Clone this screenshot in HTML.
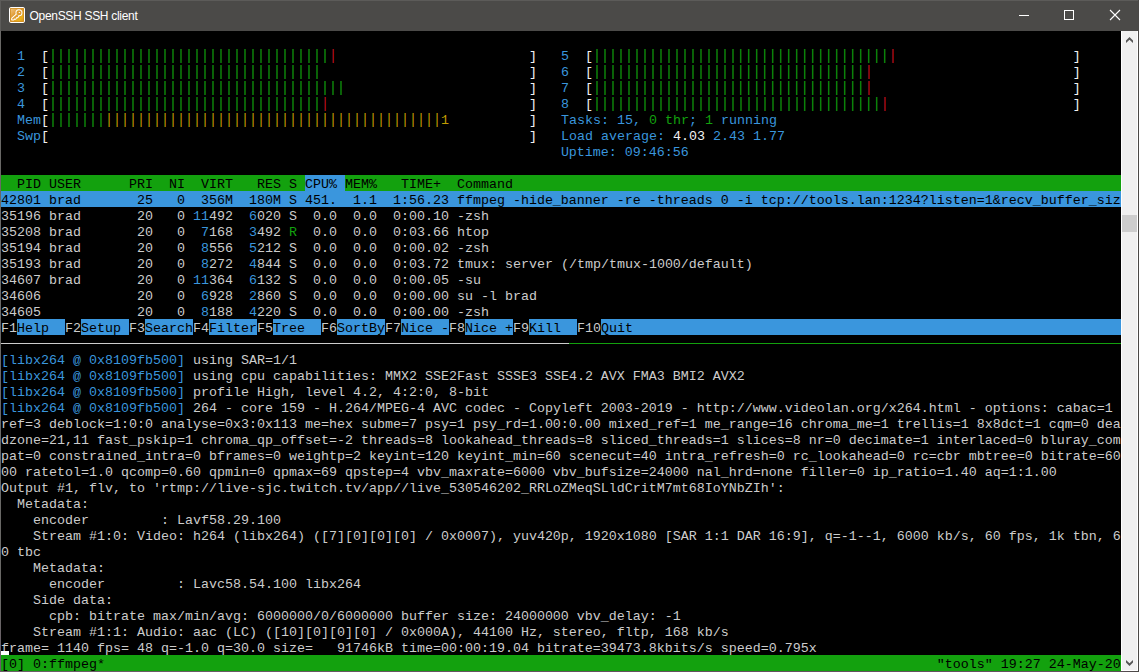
<!DOCTYPE html>
<html><head><meta charset="utf-8"><title>OpenSSH SSH client</title>
<style>
html,body{margin:0;padding:0;background:#000;overflow:hidden}
#win{position:absolute;left:0;top:0;width:1139px;height:672px;background:#000;overflow:hidden}
#tb{position:absolute;left:0;top:0;width:1139px;height:31px;background:#4b4a48}
#tb .t{position:absolute;left:29.5px;top:1px;letter-spacing:-0.3px;height:31px;line-height:31px;color:#fff;font-family:"Liberation Sans",sans-serif;font-size:12px;white-space:pre}
#bt{position:absolute;left:0;top:0;width:1139px;height:1px;background:#5c5b59}
#bl0{position:absolute;left:0;top:0;width:1px;height:31px;background:#5c5b59}
#bl{position:absolute;left:0;top:31px;width:1px;height:641px;background:linear-gradient(180deg,#696866 0,#696866 90%,#6a5a68 100%)}
#br{position:absolute;left:1138px;top:0;width:1px;height:672px;background:#4a4846}
#bb{position:absolute;left:0;top:671px;width:1139px;height:1px;background:linear-gradient(90deg,#6c6068 0,#64525f 50%,#64525f 97%,#4a4846 100%)}
#sb{position:absolute;left:1121px;top:31px;width:15px;height:639px;background:#f0f0f0;border-left:1px solid #fff;border-right:1px solid #fff;border-bottom:1px solid #fff}
#th{position:absolute;left:0;top:184px;width:15px;height:17px;background:#cdcdcd}
#term{position:absolute;left:1px;top:31px;width:1120px;height:640px;overflow:hidden;background:#000;color:#cccccc;font-family:"Liberation Mono",monospace;font-size:13.33px}
.r{position:absolute;left:0;height:16px;line-height:20px;white-space:pre}
.r span{display:inline-block;height:16px;vertical-align:top}
.r span.v{transform:scaleY(1.15);transform-origin:50% 100%}
#dv1{position:absolute;left:0;top:312px;width:568px;height:1px;background:#cccccc}
#dv2{position:absolute;left:568px;top:312px;width:552px;height:1px;background:#13a10e}
#cur{position:absolute;left:0;top:620px;width:8px;height:4px;background:#fff}
</style></head><body>
<div id="win">
<div id="tb">
<svg style="position:absolute;left:9px;top:7px" width="16" height="16" viewBox="0 0 16 16">
<defs><linearGradient id="g" x1="0" y1="0" x2="1" y2="1"><stop offset="0" stop-color="#f2c47e"/><stop offset="0.45" stop-color="#dc9428"/><stop offset="0.8" stop-color="#ecb21c"/><stop offset="1" stop-color="#d9951f"/></linearGradient></defs>
<rect x="0.5" y="0.5" width="15" height="15" rx="1.3" fill="#d28e22" stroke="#fff" stroke-width="1"/>
<rect x="1.8" y="1.8" width="12.4" height="12.4" rx="0.8" fill="url(#g)"/>
<g fill="#fff" stroke="#fff" stroke-width="2" stroke-linejoin="round"><circle cx="9.95" cy="5.7" r="2.5"/><path d="M7.9 7.2 L3.2 11.6 L3.1 12.5 L4.6 12.4 L5.3 11.4 L6.6 11.7 L7.2 10.3 L8.4 10.3 L9.6 8.7 Z"/></g>
<g fill="#e09c30"><circle cx="9.95" cy="5.7" r="2.5"/><path d="M7.9 7.2 L3.2 11.6 L3.1 12.5 L4.6 12.4 L5.3 11.4 L6.6 11.7 L7.2 10.3 L8.4 10.3 L9.6 8.7 Z"/></g>
<ellipse cx="10.4" cy="5.5" rx="0.75" ry="0.5" fill="#fff"/>
</svg>
<div class="t">OpenSSH SSH client</div>
<svg style="position:absolute;left:1001px;top:0" width="138" height="31" viewBox="0 0 138 31" shape-rendering="crispEdges">
<line x1="18" y1="15.5" x2="28" y2="15.5" stroke="#fff" stroke-width="1"/>
<rect x="63.5" y="10.5" width="9" height="9" fill="none" stroke="#fff" stroke-width="1"/>
<g shape-rendering="geometricPrecision"><path d="M109 10 L119 20 M119 10 L109 20" stroke="#fff" stroke-width="1.1" fill="none"/></g>
</svg>
</div>
<div id="bt"></div><div id="bl0"></div><div id="bl"></div><div id="br"></div><div id="bb"></div>
<div id="sb"><div id="th"></div>
<svg style="position:absolute;left:-1px;top:0" width="17" height="17" viewBox="0 0 17 17"><path d="M5 12 L5 9.5 L8.5 6 L12 9.5 L12 12 L8.5 8.7 Z" fill="#555"/></svg>
<svg style="position:absolute;left:-1px;top:623px" width="17" height="17" viewBox="0 0 17 17"><path d="M5 6 L5 8.5 L8.5 12 L12 8.5 L12 6 L8.5 9.3 Z" fill="#555"/></svg>
</div>
<div id="term">
<div class="r" style="top:16px">  <span style="color:#3a96dd;">1</span>  <span class="k" style="color:#f2f2f2;">[</span><span class="v" style="color:#13a10e;">|||||||||||||||||||||||||||||||||||</span><span class="v" style="color:#c50f1f;">|</span>                        <span class="k" style="color:#f2f2f2;">]</span>   <span style="color:#3a96dd;">5</span>  <span class="k" style="color:#f2f2f2;">[</span><span class="v" style="color:#13a10e;">|||||||||||||||||||||||||||||||||||||</span><span class="v" style="color:#c50f1f;">|</span>                      <span class="k" style="color:#f2f2f2;">]</span></div>
<div class="r" style="top:32px">  <span style="color:#3a96dd;">2</span>  <span class="k" style="color:#f2f2f2;">[</span><span class="v" style="color:#13a10e;">||||||||||||||||||||||||||||||||||</span>                          <span class="k" style="color:#f2f2f2;">]</span>   <span style="color:#3a96dd;">6</span>  <span class="k" style="color:#f2f2f2;">[</span><span class="v" style="color:#13a10e;">||||||||||||||||||||||||||||||||||</span><span class="v" style="color:#c50f1f;">|</span>                         <span class="k" style="color:#f2f2f2;">]</span></div>
<div class="r" style="top:48px">  <span style="color:#3a96dd;">3</span>  <span class="k" style="color:#f2f2f2;">[</span><span class="v" style="color:#13a10e;">|||||||||||||||||||||||||||||||||||||</span>                       <span class="k" style="color:#f2f2f2;">]</span>   <span style="color:#3a96dd;">7</span>  <span class="k" style="color:#f2f2f2;">[</span><span class="v" style="color:#13a10e;">||||||||||||||||||||||||||||||||||</span><span class="v" style="color:#c50f1f;">|</span>                         <span class="k" style="color:#f2f2f2;">]</span></div>
<div class="r" style="top:64px">  <span style="color:#3a96dd;">4</span>  <span class="k" style="color:#f2f2f2;">[</span><span class="v" style="color:#13a10e;">||||||||||||||||||||||||||||||||||</span><span class="v" style="color:#c50f1f;">|</span>                         <span class="k" style="color:#f2f2f2;">]</span>   <span style="color:#3a96dd;">8</span>  <span class="k" style="color:#f2f2f2;">[</span><span class="v" style="color:#13a10e;">||||||||||||||||||||||||||||||||||||</span><span class="v" style="color:#c50f1f;">|</span>                       <span class="k" style="color:#f2f2f2;">]</span></div>
<div class="r" style="top:80px">  <span style="color:#3a96dd;">Mem</span><span class="k" style="color:#f2f2f2;">[</span><span class="v" style="color:#13a10e;">|||||||</span><span class="v" style="color:#c19c00;">||||||||||||||||||||||||||||||||||||||||||</span><span style="color:#c19c00;">1</span>          <span class="k" style="color:#f2f2f2;">]</span>   <span style="color:#3a96dd;">Tasks: 15, </span><span style="color:#13a10e;">0 thr</span><span style="color:#3a96dd;">; </span><span style="color:#13a10e;">1</span><span style="color:#3a96dd;"> running</span></div>
<div class="r" style="top:96px">  <span style="color:#3a96dd;">Swp</span><span class="k" style="color:#f2f2f2;">[</span>                                                            <span class="k" style="color:#f2f2f2;">]</span>   <span style="color:#3a96dd;">Load average: </span><span style="color:#f2f2f2;">4.03 </span><span style="color:#3a96dd;">2.43 </span><span style="color:#3a96dd;">1.77</span></div>
<div class="r" style="top:112px">                                                                      <span style="color:#3a96dd;">Uptime: 09:46:56</span></div>
<div class="r" style="top:144px"><span style="color:#000000;background:#13a10e;">  PID USER      PRI  NI  VIRT   RES S </span><span style="color:#000000;background:#3a96dd;">CPU% </span><span style="color:#000000;background:#13a10e;">MEM%   TIME+  Command                                                                            </span></div>
<div class="r" style="top:160px"><span style="color:#000000;background:#3a96dd;">42801 brad       25   0  356M  180M S 451.  1.1  1:56.23 ffmpeg -hide_banner -re -threads 0 -i tcp://tools.lan:1234?listen=1&amp;recv_buffer_siz</span></div>
<div class="r" style="top:176px">35196 brad       20   0 <span style="color:#3a96dd;">11</span>492  <span style="color:#3a96dd;">6</span>020 S  0.0  0.0  0:00.10 -zsh</div>
<div class="r" style="top:192px">35208 brad       20   0  <span style="color:#3a96dd;">7</span>168  <span style="color:#3a96dd;">3</span>492 <span style="color:#13a10e;">R </span> 0.0  0.0  0:03.66 htop</div>
<div class="r" style="top:208px">35194 brad       20   0  <span style="color:#3a96dd;">8</span>556  <span style="color:#3a96dd;">5</span>212 S  0.0  0.0  0:00.02 -zsh</div>
<div class="r" style="top:224px">35193 brad       20   0  <span style="color:#3a96dd;">8</span>272  <span style="color:#3a96dd;">4</span>844 S  0.0  0.0  0:03.72 tmux: server (/tmp/tmux-1000/default)</div>
<div class="r" style="top:240px">34607 brad       20   0 <span style="color:#3a96dd;">11</span>364  <span style="color:#3a96dd;">6</span>132 S  0.0  0.0  0:00.05 -su</div>
<div class="r" style="top:256px">34606            20   0  <span style="color:#3a96dd;">6</span>928  <span style="color:#3a96dd;">2</span>860 S  0.0  0.0  0:00.00 su -l brad</div>
<div class="r" style="top:272px">34605            20   0  <span style="color:#3a96dd;">8</span>188  <span style="color:#3a96dd;">4</span>220 S  0.0  0.0  0:00.00 -zsh</div>
<div class="r" style="top:288px">F1<span style="color:#000000;background:#3a96dd;">Help  </span>F2<span style="color:#000000;background:#3a96dd;">Setup </span>F3<span style="color:#000000;background:#3a96dd;">Search</span>F4<span style="color:#000000;background:#3a96dd;">Filter</span>F5<span style="color:#000000;background:#3a96dd;">Tree  </span>F6<span style="color:#000000;background:#3a96dd;">SortBy</span>F7<span style="color:#000000;background:#3a96dd;">Nice -</span>F8<span style="color:#000000;background:#3a96dd;">Nice +</span>F9<span style="color:#000000;background:#3a96dd;">Kill  </span>F10<span style="color:#000000;background:#3a96dd;">Quit</span><span style="color:#000000;background:#3a96dd;">                                                             </span></div>
<div class="r" style="top:320px"><span style="color:#3a96dd;">[libx264 @ 0x8109fb500]</span> using SAR=1/1</div>
<div class="r" style="top:336px"><span style="color:#3a96dd;">[libx264 @ 0x8109fb500]</span> using cpu capabilities: MMX2 SSE2Fast SSSE3 SSE4.2 AVX FMA3 BMI2 AVX2</div>
<div class="r" style="top:352px"><span style="color:#3a96dd;">[libx264 @ 0x8109fb500]</span> profile High, level 4.2, 4:2:0, 8-bit</div>
<div class="r" style="top:368px"><span style="color:#3a96dd;">[libx264 @ 0x8109fb500]</span> 264 - core 159 - H.264/MPEG-4 AVC codec - Copyleft 2003-2019 - http<span>://</span>www.videolan.org/x264.html - options: cabac=1 </div>
<div class="r" style="top:384px">ref=3 deblock=1:0:0 analyse=0x3:0x113 me=hex subme=7 psy=1 psy_rd=1.00:0.00 mixed_ref=1 me_range=16 chroma_me=1 trellis=1 8x8dct=1 cqm=0 dea</div>
<div class="r" style="top:400px">dzone=21,11 fast_pskip=1 chroma_qp_offset=-2 threads=8 lookahead_threads=8 sliced_threads=1 slices=8 nr=0 decimate=1 interlaced=0 bluray_com</div>
<div class="r" style="top:416px">pat=0 constrained_intra=0 bframes=0 weightp=2 keyint=120 keyint_min=60 scenecut=40 intra_refresh=0 rc_lookahead=0 rc=cbr mbtree=0 bitrate=60</div>
<div class="r" style="top:432px">00 ratetol=1.0 qcomp=0.60 qpmin=0 qpmax=69 qpstep=4 vbv_maxrate=6000 vbv_bufsize=24000 nal_hrd=none filler=0 ip_ratio=1.40 aq=1:1.00</div>
<div class="r" style="top:448px">Output #1, flv, to 'rtmp://live-sjc.twitch.tv/app//live_530546202_RRLoZMeqSLldCritM7mt68IoYNbZIh':</div>
<div class="r" style="top:464px">  Metadata:</div>
<div class="r" style="top:480px">    encoder         : Lavf58.29.100</div>
<div class="r" style="top:496px">    Stream #1:0: Video: h264 (libx264) ([7][0][0][0] / 0x0007), yuv420p, 1920x1080 [SAR 1:1 DAR 16:9], q=-1--1, 6000 kb/s, 60 fps, 1k tbn, 6</div>
<div class="r" style="top:512px">0 tbc</div>
<div class="r" style="top:528px">    Metadata:</div>
<div class="r" style="top:544px">      encoder         : Lavc58.54.100 libx264</div>
<div class="r" style="top:560px">    Side data:</div>
<div class="r" style="top:576px">      cpb: bitrate max/min/avg: 6000000/0/6000000 buffer size: 24000000 vbv_delay: -1</div>
<div class="r" style="top:592px">    Stream #1:1: Audio: aac (LC) ([10][0][0][0] / 0x000A), 44100 Hz, stereo, fltp, 168 kb/s</div>
<div class="r" style="top:608px">frame= 1140 fps= 48 q=-1.0 q=30.0 size=   91746kB time=00:00:19.04 bitrate=39473.8kbits/s speed=0.795x</div>
<div class="r" style="top:624px"><span style="color:#000000;background:#13a10e;">[0] 0:ffmpeg*                                                                                                        "tools" 19:27 24-May-20</span></div>
<div id="dv1"></div><div id="dv2"></div><div id="cur"></div>
</div>
</div>
</body></html>
